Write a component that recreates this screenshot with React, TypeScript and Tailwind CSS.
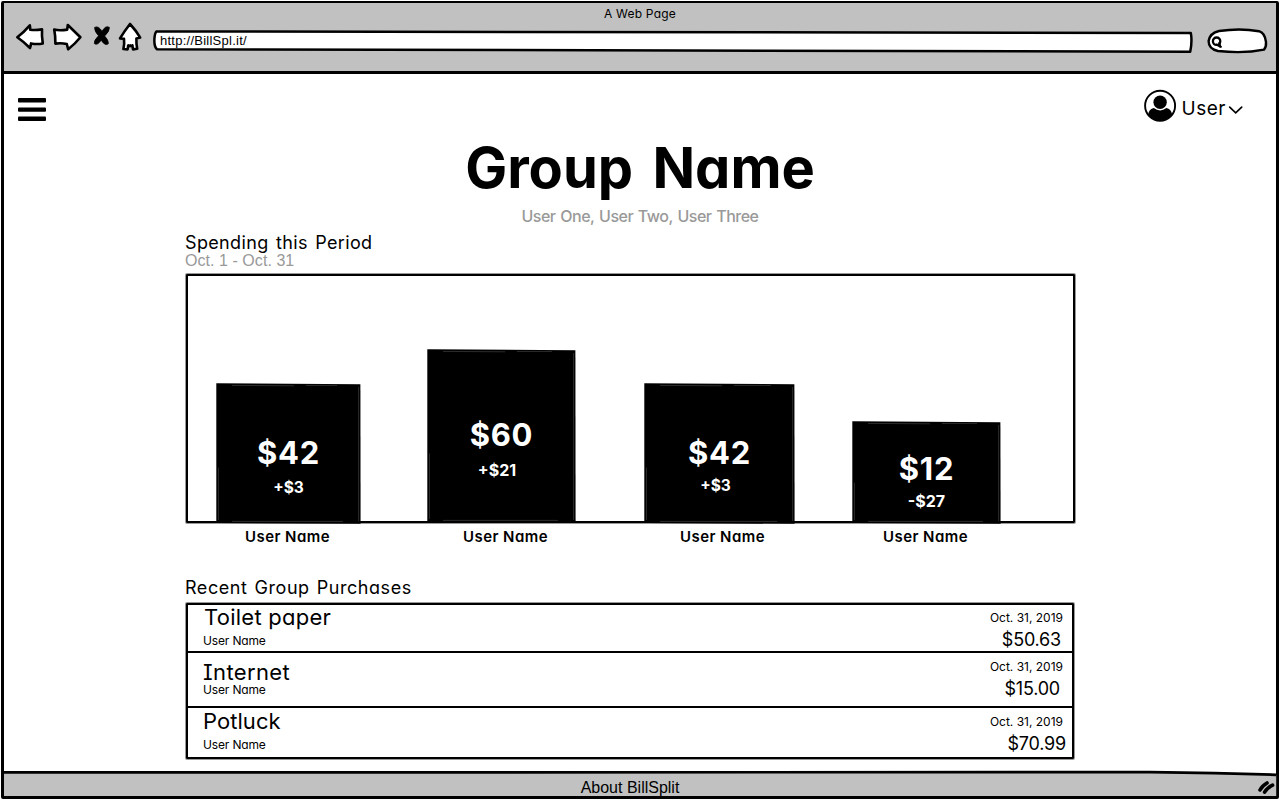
const bars = [
  { amount: "$42", delta: "+$3", w: 145, h: 141, box: "w-[145px] h-[141px] ml-[28px] -mb-[3px] pt-[52px]", sub: "mt-[7px] text-[15.5px]" },
  { amount: "$60", delta: "+$21", w: 149, h: 174, box: "w-[149px] h-[174px] ml-[66px] -mb-[2px] pt-[68px]", sub: "mt-[7px] pr-[9px] text-[16px]" },
  { amount: "$42", delta: "+$3", w: 151, h: 141, box: "w-[151px] h-[141px] ml-[68px] -mb-[3px] pt-[52px]", sub: "mt-[5px] pr-[8px] text-[15.5px]" },
  { amount: "$12", delta: "-$27", w: 149, h: 103, box: "w-[149px] h-[103px] ml-[57px] -mb-[3px] pt-[30px]", sub: "mt-[4px] text-[16px]" },
];

const labels = ["ml-[30px]", "ml-[73px]", "ml-[72px]", "ml-[58px]"];

const purchases = [
  {
    title: "Toilet paper", amount: "$50.63",
    row: "h-[48px] border-b-2", left: "pt-0", user: "mt-[5px]", name: "tracking-[0.25px] pl-px",
    right: "pt-[5px]", price: "pr-[2px]",
  },
  {
    title: "Internet", amount: "$15.00",
    row: "h-[55px] border-b-2", left: "pt-[7px]", user: "-mt-px", name: "tracking-[0.35px]",
    right: "pt-[6px]", price: "pr-[3px]",
  },
  {
    title: "Potluck", amount: "$70.99",
    row: "h-[49px]", left: "pt-px", user: "mt-[5px]", name: "tracking-[0.05px]",
    right: "pt-[6px]", price: "-mr-[3px]",
  },
];

const line = { fill: "#fff", stroke: "#000", strokeWidth: 2.6, strokeLinejoin: "round", strokeLinecap: "round" } as const;

function BrowserBar() {
  return (
    <header className="h-[71px] shrink-0 border-b-[3px] border-black bg-[#c1c1c1]">
      <div className="h-[21px] text-center text-[12px] leading-[21px] tracking-[0.2px]">A Web Page</div>
      <nav className="flex h-[34px] items-center pr-[8px] pl-[12px]">
        <svg className="h-[34px] w-[28px] overflow-visible" viewBox="16 24 28 34">
          <path {...line} d="M17.3 37.3 Q24 32 29.8 25.3 Q30.2 27 30.2 29.8 Q36 30.3 42 29.4 Q41.6 36 42.8 43.5 Q37 44.6 31 43.4 Q30.8 46 30 48 Q24 42 17.3 37.3Z" />
        </svg>
        <svg className="ml-[8px] h-[34px] w-[30px] overflow-visible" viewBox="52 24 30 34">
          <path {...line} d="M54.2 29.6 Q60 31 67.2 29.6 L67.8 25 Q74 31 80.4 37.3 Q75 44 68.2 49.3 L66.8 44 Q61 42.6 55.4 43.6 Q55.5 36 54.2 29.6Z" />
        </svg>
        <svg className="ml-[10px] h-[34px] w-[19px] overflow-visible" viewBox="92 24 19 34">
          <path d="M94.6 27.4 Q98.6 25.4 102 31.4 Q105.6 25 109.4 27.4 Q109.6 31.4 104.6 36 Q108.6 40 108.4 43.6 Q105.4 46.6 101.2 40.2 Q97.2 45.8 94.4 43.6 Q93.6 40.4 98.6 35.8 Q94.4 31.4 94.6 27.4Z" stroke="#000" strokeWidth="0.8" />
        </svg>
        <svg className="ml-[7px] h-[34px] w-[24px] overflow-visible" viewBox="118 24 24 34">
          <path {...line} d="M130 24 Q136 30.5 140.2 37.6 L136.4 38.4 Q136.2 43.5 137.2 48.8 L133 49.4 L132.4 45.4 Q131.6 47 130.2 45.4 Q129 47 128.2 45.4 L127.6 49.4 L123.4 49 Q124.6 44 124 38.8 L120 38.4 Q124.5 31 130 24Z" />
        </svg>
        <div className="relative ml-[11px] h-[22px] flex-1">
          <svg className="absolute inset-0 h-full w-full overflow-visible" viewBox="153 30 1040 22">
            <path {...line} strokeWidth={2.5} d="M156.5 31.4 Q600 30.6 1190.8 33 Q1192.4 41 1190.2 51.8 Q700 50.4 157 49.2 Q154 47 154.4 39 Q154.8 33 156.5 31.4Z" />
          </svg>
          <span className="relative block pl-[7px] font-['Liberation_Sans',sans-serif] text-[13px] leading-[21px] tracking-[0.25px]">http://BillSpl.it/</span>
        </div>
        <svg className="ml-[14px] h-[26px] w-[61px] overflow-visible" viewBox="1207 28 61 26">
          <path {...line} strokeWidth={2.4} d="M1208.6 41 Q1210 33 1219 31 Q1240 27.8 1259 31.2 Q1265 33 1266 42 Q1266.4 47 1264 49.6 Q1244 53.8 1218 51 Q1208.6 49 1208.6 41Z" />
          <circle cx="1216.6" cy="41.2" r="3.7" fill="none" stroke="#000" strokeWidth="2.3" />
          <path d="M1216.4 44.6 L1220.8 46.8 M1219.4 42.8 L1220.2 46.8" fill="none" stroke="#000" strokeWidth="2.1" strokeLinecap="round" />
        </svg>
      </nav>
    </header>
  );
}

function TopRow() {
  return (
    <div className="flex h-[64px] items-center justify-between pr-[33px] pl-[14px]">
      <svg className="h-[34px] w-[28px]" viewBox="18 89 28 34">
        <rect x="18" y="98" width="28" height="4.4" rx="1" />
        <rect x="18" y="107.4" width="28" height="4.4" rx="1" />
        <rect x="18" y="116.6" width="28" height="4.4" rx="1" />
      </svg>
      <div className="flex items-center">
        <svg className="h-[34px] w-[34px]" viewBox="1142 89 34 34">
          <circle cx="1159.1" cy="105.7" r="15" fill="#fff" stroke="#000" strokeWidth="1.9" />
          <circle cx="1159.1" cy="102.2" r="6.7" />
          <path d="M1147 114.6 Q1148.2 108.6 1152.8 108 Q1159.1 112.8 1165.4 108 Q1170 108.6 1171.2 114.6 Q1166.4 121 1159.1 121 Q1151.8 121 1147 114.6Z" />
        </svg>
        <span className="mt-[6px] ml-[5px] text-[19px] leading-[26px] tracking-[0.5px]">User</span>
        <svg className="ml-[2px] h-[34px] w-[15px]" viewBox="1228.5 89 15 34">
          <path d="M1230.2 107.2 L1236.2 112.8 L1242.2 107.2" fill="none" stroke="#000" strokeWidth="1.7" strokeLinecap="round" />
        </svg>
      </div>
    </div>
  );
}

function Chart() {
  return (
    <>
      <div className="mt-[3px] ml-px flex h-[249px] w-[889px] items-end rounded-[1px] border-2 border-black shadow-[0_0_0_1px_rgba(0,0,0,0.4)]">
        {bars.map((b, i) => (
          <div key={i} className={`relative flex shrink-0 flex-col items-center font-bold text-white ${b.box}`}>
            <svg className="absolute inset-0 h-full w-full" viewBox={`0 0 ${b.w} ${b.h}`} preserveAspectRatio="none">
              <path d={`M0.3 0.3 L${b.w - 0.6} 1.2 L${b.w - 0.4} ${b.h - 0.2} L2 ${b.h - 1} L0.3 ${b.h - 2}Z`} />
              <path d={`M16 2.4 L78 2.8 M90 2.4 L${b.w - 24} 2.4 M2.4 ${b.h * 0.6} V${b.h - 4} M${b.w - 2.4} 4 V${b.h - 3} M16 ${b.h - 2.6} H${b.w - 18}`} fill="none" stroke="#fff" strokeOpacity="0.22" strokeWidth="0.8" />
            </svg>
            <span className="relative text-[31px] leading-[36px] tracking-[0.7px]">{b.amount}</span>
            <span className={`relative leading-[20px] ${b.sub}`}>{b.delta}</span>
          </div>
        ))}
      </div>
      <div className="flex h-[26px] leading-[28px]">
        {labels.map((l, i) => (
          <span key={i} className={`w-[145px] shrink-0 text-center text-[15px] font-semibold tracking-[0.45px] ${l}`}>User Name</span>
        ))}
      </div>
    </>
  );
}

function Purchases() {
  return (
    <div className="mt-px ml-px h-[156px] w-[888px] rounded-[1px] border-2 border-black shadow-[0_0_0_1px_rgba(0,0,0,0.4)]">
      {purchases.map((p) => (
        <div key={p.title} className={`flex justify-between border-black pr-[9px] pl-[15px] ${p.row}`}>
          <div className={`flex flex-col ${p.left}`}>
            <span className={`text-[22px] leading-[24px] ${p.name}`}>{p.title}</span>
            <span className={`text-[12px] leading-[14px] tracking-[-0.15px] ${p.user}`}>User Name</span>
          </div>
          <div className={`flex flex-col items-end ${p.right}`}>
            <span className="text-[12px] leading-[16px]">Oct. 31, 2019</span>
            <span className={`mt-[4px] text-[18px] leading-[20px] tracking-[-0.2px] ${p.price}`}>{p.amount}</span>
          </div>
        </div>
      ))}
    </div>
  );
}

export default function App() {
  return (
    <div className="h-[800px] w-[1280px] overflow-hidden bg-white p-px">
      <div className="flex h-[798px] w-[1278px] flex-col rounded-[2px] border-[3px] border-t-2 border-black font-['Inter','Liberation_Sans',sans-serif] text-black [font-feature-settings:'cv11','cv08']">
        <BrowserBar />
        <main className="h-[697px] shrink-0">
          <TopRow />
          <h1 className="mt-px text-center text-[56px] leading-[59px] font-bold [word-spacing:6px]">Group Name</h1>
          <p className="text-center text-[16px] leading-[37px] font-medium tracking-[-0.5px] text-[#999] [word-spacing:1px]">User One, User Two, User Three</p>
          <section className="ml-[181px] w-[890px]">
            <h2 className="text-[18px] leading-[15px] tracking-[0.35px] [word-spacing:2px]">Spending this Period</h2>
            <p className="font-['Liberation_Sans',sans-serif] text-[16px] leading-[21px] tracking-[0.05px] text-[#999]">Oct. 1 - Oct. 31</p>
            <Chart />
            <h2 className="mt-[25px] text-[18px] leading-[28px] tracking-[0.55px] [word-spacing:1.5px]">Recent Group Purchases</h2>
            <Purchases />
          </section>
        </main>
        <footer className="relative h-[25px] shrink-0">
          <svg className="absolute inset-0 h-[25px] w-full overflow-visible" viewBox="4 771 1272 25" preserveAspectRatio="none">
            <path d="M4 772.4 L1150 772.2 Q1220 773 1276.2 774.8 V796 H4Z" fill="#c1c1c1" />
            <path d="M4 772.4 L1150 772.2 Q1220 773 1276.2 774.8" fill="none" stroke="#000" strokeWidth="2.7" />
            <path d="M1260 790 Q1262 786 1267 783 M1264.6 792.2 Q1267 788 1272.6 785.2" fill="none" stroke="#000" strokeWidth="3.6" strokeLinecap="round" />
          </svg>
          <p className="relative pt-[4px] pr-[20px] text-center font-['Liberation_Sans',sans-serif] text-[16px] leading-[26px]">About BillSplit</p>
        </footer>
      </div>
    </div>
  );
}
